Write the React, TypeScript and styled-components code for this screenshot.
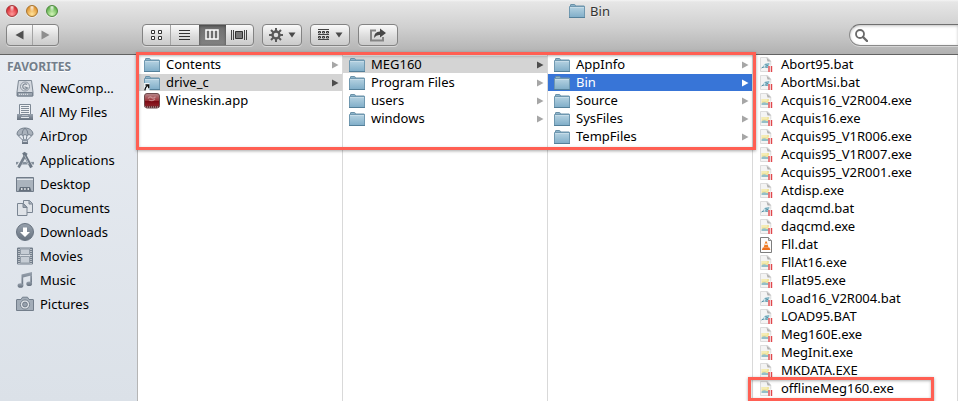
import React from 'react';
import styled, { createGlobalStyle, css } from 'styled-components';

const RED = '#ff5f53';

const GlobalStyle = createGlobalStyle`
  *, *::before, *::after { box-sizing: border-box; }
  html, body { margin: 0; background: #fff; overflow: hidden; }
  body, button, input { font-family: "Noto Sans", "Open Sans", sans-serif; font-size: 13px; color: #000; }
`;

const Window = styled.div`
  display: flex;
  flex-direction: column;
  height: 100vh;
`;

const TopBar = styled.header`
  flex: none;
  display: flex;
  flex-direction: column;
  background: linear-gradient(#f4f4f4 0, #e6e6e6 2px, #cfcfcf 28px, #b1b1b1 54px);
  border-bottom: 1px solid #626262;
`;

const TitleRow = styled.div`
  display: flex;
  align-items: center;
  height: 22px;
  padding-left: 6px;
`;

const Lights = styled.div`
  display: flex;
  gap: 8px;
  width: 215px;
  flex: none;
`;

const Light = styled.button<{ $edge: string; $deep: string; $glow: string }>`
  width: 12px;
  height: 12px;
  padding: 0;
  border: 1px solid ${p => p.$edge};
  border-radius: 50%;
  background:
    radial-gradient(ellipse at 50% 12%, rgba(255, 255, 255, 0.9) 0, rgba(255, 255, 255, 0) 38%),
    radial-gradient(circle at 50% 80%, ${p => p.$glow} 0, ${p => p.$deep} 75%);
  box-shadow: 0 1px 0 rgba(255, 255, 255, 0.5);
`;

const Title = styled.h1`
  flex: 1;
  display: flex;
  justify-content: center;
  align-items: center;
  gap: 5px;
  margin: 0;
  font-size: 13px;
  line-height: 18px;
  font-weight: 400;
  color: #333;
  text-shadow: 0 1px 0 rgba(255, 255, 255, 0.6);
`;

const Tools = styled.div`
  display: flex;
  align-items: center;
  gap: 8px;
  height: 32px;
  padding: 2px 0 8px 6px;
`;

const Group = styled.div`
  display: flex;
  flex: none;
  height: 22px;
  border: 1px solid #838383;
  border-radius: 4px;
  overflow: hidden;
  background: linear-gradient(#fafafa, #dadada 60%, #cbcbcb);
  box-shadow: 0 1px 0 rgba(255, 255, 255, 0.45);
`;

const NavGroup = styled(Group)`
  width: 53px;
  margin-right: 75px;
`;

const ViewGroup = styled(Group)`
  width: 112px;
`;

const SingleGroup = styled(Group)`
  width: 40px;
`;

const ToolButton = styled.button<{ $active?: boolean; $divided?: boolean }>`
  flex: 1;
  display: flex;
  align-items: center;
  justify-content: center;
  gap: 5px;
  min-width: 0;
  padding: 0;
  border: 0;
  background: none;
  ${p => p.$divided && css`border-right: 1px solid #a3a3a3;`}
  ${p => p.$active && css`
    background: linear-gradient(#6e6e6e, #828282);
    box-shadow: inset 0 1px 3px rgba(0, 0, 0, 0.4);
  `}
`;

const Search = styled.label`
  flex: none;
  display: flex;
  align-items: center;
  gap: 5px;
  width: 109px;
  height: 22px;
  margin-left: auto;
  padding-left: 5px;
  border: 1px solid #8a8a8a;
  border-top-color: #6f6f6f;
  border-right: 0;
  border-radius: 11px 0 0 11px;
  background: #fff;
  box-shadow: inset 0 1px 3px rgba(0, 0, 0, 0.25), 0 1px 0 rgba(255, 255, 255, 0.4);
`;

const SearchInput = styled.input`
  flex: 1;
  min-width: 0;
  padding: 0;
  border: 0;
  outline: 0;
  background: none;
`;

const Body = styled.div`
  flex: 1;
  display: flex;
  min-height: 0;
`;

const Sidebar = styled.nav`
  flex: none;
  width: 138px;
  border-right: 1px solid #b5b5b5;
  background: linear-gradient(#e8ecf2, #dbe1e8);
`;

const SidebarHeading = styled.h2`
  margin: 3px 0 0 7px;
  font-size: 12px;
  line-height: 18px;
  font-weight: 700;
  color: #737e8b;
  text-shadow: 0 1px 0 #fff;
`;

const List = styled.ul`
  margin: 0;
  padding: 0;
  list-style: none;
`;

const Place = styled.a`
  display: flex;
  align-items: center;
  gap: 6px;
  height: 24px;
  padding-left: 16px;
  color: #000;
  text-decoration: none;
  white-space: nowrap;
  svg { flex: none; }
`;

const Browser = styled.main`
  position: relative;
  flex: 1;
  display: grid;
  grid-template-columns: repeat(4, 1fr);
  min-width: 0;
`;

const Column = styled(List)`
  display: flex;
  flex-direction: column;
  gap: 1px;
  padding-top: 1px;
  border-right: 1px solid #d9d9d9;
  min-width: 0;
`;

const Entry = styled.li`
  position: relative;
`;

const Row = styled.button<{ $state?: 'path' | 'selected' }>`
  display: flex;
  align-items: center;
  gap: 6px;
  width: 100%;
  height: 17px;
  padding: 0 3px 0 6px;
  border: 0;
  background: ${p => (p.$state === 'selected' ? '#3875d7' : p.$state === 'path' ? '#d4d4d4' : 'none')};
  color: ${p => (p.$state === 'selected' ? '#fff' : '#000')};
  line-height: 17px;
  text-align: left;
  white-space: nowrap;
  svg { flex: none; }
`;

const Name = styled.span`
  flex: 1;
`;

const Marker = styled.div`
  position: absolute;
  border: 3px solid ${RED};
  box-shadow: 0 1px 3px rgba(0, 0, 0, 0.35), inset 0 1px 3px rgba(0, 0, 0, 0.3);
  pointer-events: none;
`;

const FoldersMarker = styled(Marker)`
  top: -3px;
  left: -2px;
  right: calc(25% - 3px);
  height: 98px;
`;

const FileMarker = styled(Marker)`
  top: -3px;
  left: -5px;
  right: 23px;
  height: 24px;
`;

const Defs = () => (
  <svg width="0" height="0" aria-hidden="true" display="block">
    <defs>
      <linearGradient id="folder" x1="0" y1="0" x2="0" y2="1">
        <stop offset="0" stopColor="#b7d3e2" />
        <stop offset="1" stopColor="#7fadc8" />
      </linearGradient>
      <linearGradient id="wine" x1="0" y1="0" x2="0" y2="1">
        <stop offset="0" stopColor="#b98a8d" />
        <stop offset="0.5" stopColor="#9c3238" />
        <stop offset="0.55" stopColor="#7c0a14" />
        <stop offset="0.8" stopColor="#8e1c24" />
        <stop offset="1" stopColor="#4a3032" />
      </linearGradient>
      <linearGradient id="steel" x1="0" y1="0" x2="0" y2="1">
        <stop offset="0" stopColor="#98a2ae" />
        <stop offset="1" stopColor="#66717e" />
      </linearGradient>
    </defs>
  </svg>
);

const Folder = ({ alias }: { alias?: boolean }) => (
  <svg width="16" height="16" viewBox="0 0 16 16">
    <path d="M1.5 4V1.900q0-.4.4-.4h3.600q.5 0 .6.5l.4 1h8.500q.5 0 .5.5v10h-14z" fill="#8db4ca" stroke="#6a91a8" />
    <path d="M.5 3.500h15v11H.5z" fill="url(#folder)" stroke="#6f98b0" />
    <path d="M0 14.500h16" stroke="#54809a" />
    <path d="M1 4.500h14" stroke="#cfe2ec" opacity=".7" />
    {alias && (
      <g>
        <path d="M0 8h5.500v8H0z" fill="#fff" opacity=".85" />
        <path d="M1 15.500q-.4-3 2.700-5M1.500 10h3.200v3.300" fill="none" stroke="#111" strokeWidth="1.400" />
      </g>
    )}
  </svg>
);

const WineApp = () => (
  <svg width="16" height="16" viewBox="0 0 16 16">
    <rect x=".5" y=".5" width="15" height="14.500" rx="2.500" fill="url(#wine)" stroke="#6d4a4c" />
    <path d="M4 5.500q2-2.500 3.500-1t4-.8M5 7q3 1.800 6-1" fill="none" stroke="#e0b6b8" strokeWidth="1.200" opacity=".6" />
    <path d="M1 14h14" stroke="#c5b2b3" strokeDasharray="1 1" />
  </svg>
);

const FileIcon = ({ kind }: { kind: string }) => {
  if (kind === 'dat') {
    return (
      <svg width="16" height="16" viewBox="0 0 16 16">
        <path d="M1.500.5h8l3 3v12h-11z" fill="#fcfcfc" stroke="#7d7d7d" />
        <path d="M9.500.5v3h3" fill="#ddd" stroke="#8c8c8c" />
        <path d="M6.400 4.500h1.400l1.700 6H4.700z" fill="#ef7d24" />
        <path d="M5.800 6.500h2.600l.5 1.500H5.300z" fill="#f6e6da" />
        <path d="M3.800 10.500h6.600l1 2.500H2.800z" fill="#ed6f1c" />
      </svg>
    );
  }
  const bat = kind === 'bat';
  return (
    <svg width="16" height="16" viewBox="0 0 16 16">
      <path d="M1.500.5h7.300l3 3.500v10.500H1.500z" fill="#f4f4f4" stroke="#dcdcdc" />
      <path d="M7.500.5 12 4.500H8.500z" fill="#b0b0b0" />
      {bat ? (
        <g>
          <path d="M3 10.500l3-3.800 4.500-1-.8 5z" fill="#8dbccb" />
          <path d="M2.500 11l3-1.500 3 1M6.500 7.500l3 1.500" fill="none" stroke="#5590a4" />
          <circle cx="5.500" cy="9" r="1" fill="#d6ebf0" />
        </g>
      ) : (
        <g>
          <path d="M2.500 6h7.500v4.500H2.500z" fill="#f0e4a0" />
          <path d="M3 7h5" stroke="#f9f3c8" />
          <path d="M2.500 10.500q2-2 4-1t3.500 0V12H2.500z" fill="#94bfc8" />
        </g>
      )}
      <path d="M9 8.500h5V16H9z" fill="#fff" opacity=".7" />
      <path d="M10 9v6M12.500 9v6" stroke="#e0474c" strokeWidth="1.400" />
    </svg>
  );
};

const Arrow = ({ tone }: { tone: string }) => (
  <svg width="8" height="8" viewBox="0 0 8 8">
    <path d="M1 .5 7.500 4 1 7.500z" fill={tone} />
  </svg>
);

const placeArt: Record<string, React.ReactNode> = {
  'NewComp…': (
    <g>
      <path d="M2.500 1.500h13L17 13v4H1v-4z" fill="#d3d8df" stroke="#7d8894" />
      <circle cx="9" cy="7.500" r="4.500" fill="#dfe3e8" stroke="#8b95a1" />
      <path d="M11 5.500a2.600 2.600 0 1 0 .5 3.500l-3-1.200" fill="none" stroke="#7d8894" strokeWidth="1.200" />
      <path d="M1.500 13.500h15V17h-15z" fill="#9aa4af" stroke="#76818e" />
      <path d="M3 15.300h9" stroke="#e3e7eb" strokeDasharray="1 1" />
    </g>
  ),
  'All My Files': (
    <g>
      <path d="M3.500 1.500h11v10h-11z" fill="#eef0f3" stroke="#7d8894" />
      <path d="M5 3.500h8M5 5.500h8M5 7.500h8M5 9.500h8" stroke="#818c98" />
      <path d="M1 11h4l1 1.500h6l1-1.500h4v6H1z" fill="url(#steel)" />
      <path d="M5 14.500h8" stroke="#e4e8ec" />
    </g>
  ),
  AirDrop: (
    <g>
      <path d="M1 7.500C1 3.500 4.500 1 9 1s8 2.500 8 6.500l-2 1-2-1-2 1-2-1-2 1-2-1-2 1z" fill="#aab2bc" stroke="#75808d" />
      <path d="M6 7.500Q6 3.500 9 1q3 2.500 3 6.500" fill="none" stroke="#75808d" />
      <path d="M2 8.500l5 5M16 8.500l-5 5M7 8.500l1 5M11 8.500l-1 5" stroke="#75808d" />
      <path d="M6 12h6v5H6z" fill="url(#steel)" />
      <path d="M7 14.500h4" stroke="#c5ccd4" />
    </g>
  ),
  Applications: (
    <g fill="none">
      <path d="M0 12.200h18" stroke="#85909c" strokeWidth="2.600" />
      <path d="M2 16.500 10 2M8 2l7.500 14.500" stroke="#e7eaee" strokeWidth="4" />
      <path d="M2.500 16.500 10.500 2" stroke="#75808d" strokeWidth="2.600" />
      <path d="M7.500 1.500 15.500 16.500" stroke="#6c7784" strokeWidth="3" />
      <path d="M8.500 4.500l4.500 9" stroke="#aeb6bf" />
    </g>
  ),
  Desktop: (
    <g>
      <path d="M.5 2.500h17v14H.5z" fill="#aab3bd" stroke="#717c89" />
      <path d="M1 4.500h16" stroke="#e1e5ea" />
      <path d="M4 12h10l1.500 4h-13z" fill="#65707d" />
      <path d="M5 14h1.500M8.200 14h1.500M11.500 14H13" stroke="#fff" strokeWidth="1.600" />
    </g>
  ),
  Documents: (
    <g fill="#dfe3e8" stroke="#7a8592">
      <path d="M7.500 1.500h6l3 3v9h-9z" />
      <path d="M13 1.500v3.500h3.500" fill="#aab3bd" />
      <path d="M1.500 4.500h6l3.500 3.500v8.500H1.500z" />
      <path d="M7 4.500v4h4z" fill="#9aa4af" />
    </g>
  ),
  Downloads: (
    <g>
      <circle cx="9" cy="9" r="8.500" fill="url(#steel)" stroke="#687380" />
      <path d="M7 4.500h4V9h3l-5 5-5-5h3z" fill="#fff" />
    </g>
  ),
  Movies: (
    <g>
      <path d="M1.500 1h15v16h-15z" fill="#d9dee4" stroke="#737e8b" />
      <path d="M3 1v16M15 1v16" stroke="#737e8b" strokeWidth="2" />
      <path d="M3 2v15M15 2v15" stroke="#fff" strokeDasharray="1 1" />
      <path d="M4.500 2h9v5.500h-9zM4.500 9.500h9V16h-9z" fill="#c6cdd5" stroke="#929ca7" />
    </g>
  ),
  Music: (
    <g fill="url(#steel)">
      <path d="M5.500 3.500 16 1v3.300L7.200 6.500V14H5.500zM14.300 3H16v9.500h-1.700z" />
      <ellipse cx="4.500" cy="14.500" rx="2.900" ry="2.300" />
      <ellipse cx="13.200" cy="12.700" rx="2.900" ry="2.300" />
    </g>
  ),
  Pictures: (
    <g>
      <path d="M1 4.500h4l1.500-2.300h5L13 4.500h4q.5 0 .5.500v10.500H.5V5q0-.5.500-.5z" fill="#a3adb8" stroke="#737e8b" />
      <circle cx="9" cy="9.500" r="4.600" fill="#dfe3e8" stroke="#77828e" />
      <circle cx="9" cy="9.500" r="2.400" fill="#97a1ad" stroke="#717c89" />
    </g>
  ),
};

const places = Object.keys(placeArt);

type Item = { name: string; state?: 'path' | 'selected'; kind?: 'alias' | 'app' };

const folders: Item[][] = [
  [{ name: 'Contents' }, { name: 'drive_c', state: 'path', kind: 'alias' }, { name: 'Wineskin.app', kind: 'app' }],
  [{ name: 'MEG160', state: 'path' }, { name: 'Program Files' }, { name: 'users' }, { name: 'windows' }],
  [{ name: 'AppInfo' }, { name: 'Bin', state: 'selected' }, { name: 'Source' }, { name: 'SysFiles' }, { name: 'TempFiles' }],
];

const files = [
  'Abort95.bat', 'AbortMsi.bat', 'Acquis16_V2R004.exe', 'Acquis16.exe', 'Acquis95_V1R006.exe',
  'Acquis95_V1R007.exe', 'Acquis95_V2R001.exe', 'Atdisp.exe', 'daqcmd.bat', 'daqcmd.exe', 'Fll.dat',
  'FllAt16.exe', 'Fllat95.exe', 'Load16_V2R004.bat', 'LOAD95.BAT', 'Meg160E.exe', 'MegInit.exe',
  'MKDATA.EXE', 'offlineMeg160.exe',
];

const arrowTone = (state?: string) => (state === 'selected' ? '#fff' : state === 'path' ? '#4d4d4d' : '#a6a6a6');

const Caret = () => (
  <svg width="8" height="6" viewBox="0 0 8 6"><path d="M.5.500h7L4 5.500z" fill="#4a4a4a" /></svg>
);

export default function App() {
  return (
    <Window>
      <GlobalStyle />
      <Defs />
      <TopBar>
        <TitleRow>
          <Lights>
            <Light aria-label="Close" $edge="#a5383a" $deep="#d8252e" $glow="#ff9a9a" />
            <Light aria-label="Minimize" $edge="#a8742c" $deep="#e0922e" $glow="#ffe39a" />
            <Light aria-label="Zoom" $edge="#4f8a40" $deep="#5eb04a" $glow="#d3f5b8" />
          </Lights>
          <Title><Folder />Bin</Title>
        </TitleRow>
        <Tools>
          <NavGroup>
            <ToolButton $divided aria-label="Back">
              <svg width="9" height="10" viewBox="0 0 9 10"><path d="M8.500.5v9L.5 5z" fill="#505050" /></svg>
            </ToolButton>
            <ToolButton aria-label="Forward">
              <svg width="9" height="10" viewBox="0 0 9 10"><path d="M.5.500v9L8.500 5z" fill="#8e8e8e" /></svg>
            </ToolButton>
          </NavGroup>
          <ViewGroup>
            <ToolButton $divided aria-label="Icons">
              <svg width="12" height="11" viewBox="0 0 12 11"><path d="M.5.500h3v3h-3zM7.500.500h3v3h-3zM.5 6.500h3v3h-3zM7.500 6.500h3v3h-3z" fill="#fff" stroke="#333" /></svg>
            </ToolButton>
            <ToolButton aria-label="List">
              <svg width="12" height="11" viewBox="0 0 12 11"><path d="M0 .5h11M0 3.500h11M0 6.500h11M0 9.500h11" stroke="#333" /></svg>
            </ToolButton>
            <ToolButton $active aria-label="Columns">
              <svg width="14" height="12" viewBox="0 0 14 12"><path d="M1 1h12v9H1zM5 1v9M9 1v9" fill="#6d6d6d" stroke="#fff" strokeWidth="1.500" /></svg>
            </ToolButton>
            <ToolButton aria-label="Cover Flow">
              <svg width="16" height="11" viewBox="0 0 16 11"><path d="M.5 0v10M2.500 0v10M13.500 0v10M15.500 0v10" stroke="#444" /><path d="M4.500 1.500h7v7h-7z" fill="#777" stroke="#333" /></svg>
            </ToolButton>
          </ViewGroup>
          <SingleGroup>
            <ToolButton aria-label="Actions">
              <svg width="14" height="14" viewBox="0 0 14 14">
                <circle cx="7" cy="7" r="3.500" fill="none" stroke="#5a5a5a" strokeWidth="2.400" />
                <path d="M7 0v3M7 11v3M0 7h3M11 7h3M2 2l2.200 2.200M9.800 9.800 12 12M12 2 9.800 4.200M4.200 9.800 2 12" stroke="#5a5a5a" strokeWidth="2" />
              </svg>
              <Caret />
            </ToolButton>
          </SingleGroup>
          <SingleGroup>
            <ToolButton aria-label="Arrange">
              <svg width="12" height="12" viewBox="0 0 12 12">
                <path d="M0 .5h11M0 5.500h11M0 10.500h11" stroke="#444" />
                <path d="M.500 2.500h2v1.500h-2zM4.500 2.500h2v1.500h-2zM8.500 2.500h2v1.500h-2zM.500 7.500h2V9h-2zM4.500 7.500h2V9h-2zM8.500 7.500h2V9h-2z" fill="#eee" stroke="#333" />
              </svg>
              <Caret />
            </ToolButton>
          </SingleGroup>
          <SingleGroup>
            <ToolButton aria-label="Share">
              <svg width="16" height="14" viewBox="0 0 16 14">
                <path d="M6 2.500H1v10h12V9" fill="none" stroke="#858585" strokeWidth="2" />
                <path d="M4 10q0-6.500 6-6.500V.5L16 5l-6 4.500V7Q6.500 6.500 4 10z" fill="#484848" />
              </svg>
            </ToolButton>
          </SingleGroup>
          <Search>
            <svg width="13" height="13" viewBox="0 0 13 13">
              <circle cx="5" cy="5" r="4" fill="none" stroke="#6a6a6a" strokeWidth="1.800" />
              <path d="M8 8l4 4" stroke="#6a6a6a" strokeWidth="2.400" strokeLinecap="round" />
            </svg>
            <SearchInput type="search" aria-label="Search" />
          </Search>
        </Tools>
      </TopBar>
      <Body>
        <Sidebar>
          <SidebarHeading>FAVORITES</SidebarHeading>
          <List>
            {places.map(p => (
              <li key={p}>
                <Place href="#">
                  <svg width="18" height="18" viewBox="0 0 18 18">{placeArt[p]}</svg>
                  {p}
                </Place>
              </li>
            ))}
          </List>
        </Sidebar>
        <Browser>
          {folders.map((column, i) => (
            <Column key={i}>
              {column.map(item => (
                <Entry key={item.name}>
                  <Row $state={item.state}>
                    {item.kind === 'app' ? <WineApp /> : <Folder alias={item.kind === 'alias'} />}
                    <Name>{item.name}</Name>
                    {item.kind !== 'app' && <Arrow tone={arrowTone(item.state)} />}
                  </Row>
                </Entry>
              ))}
            </Column>
          ))}
          <Column>
            {files.map(name => (
              <Entry key={name}>
                <Row>
                  <FileIcon kind={name.split('.')[1].toLowerCase()} />
                  <Name>{name}</Name>
                </Row>
                {name === 'offlineMeg160.exe' && <FileMarker />}
              </Entry>
            ))}
          </Column>
          <FoldersMarker />
        </Browser>
      </Body>
    </Window>
  );
}
